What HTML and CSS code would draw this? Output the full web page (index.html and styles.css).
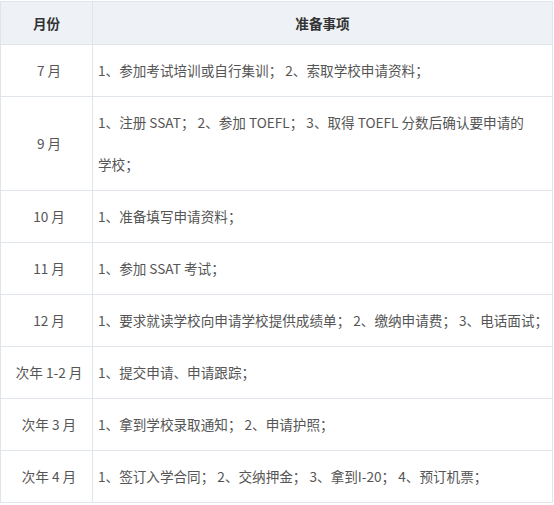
FILE: index.html
```html
<!DOCTYPE html>
<html lang="zh-CN">
<head>
<meta charset="utf-8">
<title>准备事项</title>
<link rel="stylesheet" href="styles.css">
</head>
<body>
<table class="plan">
  <thead>
    <tr><th class="col-month">月份</th><th class="col-task">准备事项</th></tr>
  </thead>
  <tbody>
    <tr><td class="month">7 月</td><td class="task">1、参加考试培训或自行集训； 2、索取学校申请资料；</td></tr>
    <tr><td class="month">9 月</td><td class="task">1、注册 SSAT； 2、参加 TOEFL； 3、取得 TOEFL 分数后确认要申请的<span class="keep">学校；</span></td></tr>
    <tr><td class="month">10 月</td><td class="task">1、准备填写申请资料；</td></tr>
    <tr><td class="month">11 月</td><td class="task">1、参加 SSAT 考试；</td></tr>
    <tr><td class="month">12 月</td><td class="task">1、要求就读学校向申请学校提供成绩单； 2、缴纳申请费； 3、电话面试；</td></tr>
    <tr><td class="month">次年 1-2 月</td><td class="task">1、提交申请、申请跟踪；</td></tr>
    <tr><td class="month">次年 3 月</td><td class="task">1、拿到学校录取通知； 2、申请护照；</td></tr>
    <tr><td class="month">次年 4 月</td><td class="task">1、签订入学合同； 2、交纳押金； 3、拿到I-20； 4、预订机票；</td></tr>
  </tbody>
</table>
</body>
</html>
```
FILE: styles.css
```css
html, body {
  margin: 0;
  padding: 0;
  background: #fff;
}
body {
  font-family: "Noto Sans CJK SC", "Noto Sans", sans-serif;
  font-size: 13.6px;
  color: #555;
}
.plan {
  margin-top: 1px;
  width: 553px;
  border-collapse: collapse;
  table-layout: fixed;
}
.plan th,
.plan td {
  border: 1px solid #dfe5ea;
}
.plan th {
  background: #eef2f6;
  color: #333;
  font-weight: bold;
  height: 42px;
  line-height: 42px;
  padding: 0;
  text-align: center;
}
.col-month {
  width: 91px;
}
.plan td {
  line-height: 42px;
  padding: 4px 0 5px 5px;
  vertical-align: middle;
}
.month {
  text-align: center;
  white-space: nowrap;
}
.task {
  text-align: left;
}
.keep {
  white-space: nowrap;
}
```
